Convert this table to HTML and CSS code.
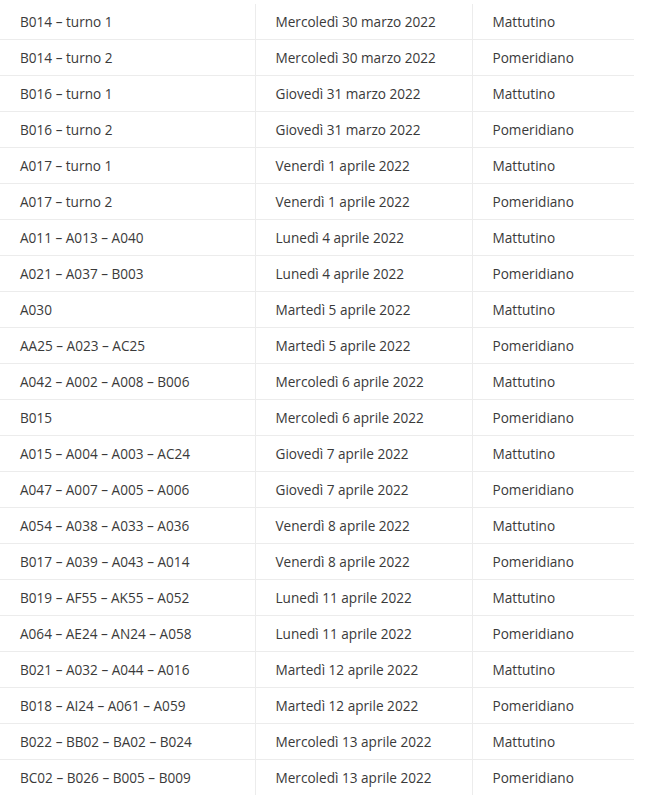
FILE: index.html
```html
<!DOCTYPE html>
<html lang="it">
<head>
<meta charset="utf-8">
<title>Calendario</title>
<link rel="stylesheet" href="styles.css">
</head>
<body>
<table class="schedule">
  <colgroup>
    <col class="c1"><col class="c2"><col class="c3">
  </colgroup>
  <tbody>
    <tr><td>B014 – turno 1</td><td>Mercoledì 30 marzo 2022</td><td>Mattutino</td></tr>
    <tr><td>B014 – turno 2</td><td>Mercoledì 30 marzo 2022</td><td>Pomeridiano</td></tr>
    <tr><td>B016 – turno 1</td><td>Giovedì 31 marzo 2022</td><td>Mattutino</td></tr>
    <tr><td>B016 – turno 2</td><td>Giovedì 31 marzo 2022</td><td>Pomeridiano</td></tr>
    <tr><td>A017 – turno 1</td><td>Venerdì 1 aprile 2022</td><td>Mattutino</td></tr>
    <tr><td>A017 – turno 2</td><td>Venerdì 1 aprile 2022</td><td>Pomeridiano</td></tr>
    <tr><td>A011 – A013 – A040</td><td>Lunedì 4 aprile 2022</td><td>Mattutino</td></tr>
    <tr><td>A021 – A037 – B003</td><td>Lunedì 4 aprile 2022</td><td>Pomeridiano</td></tr>
    <tr><td>A030</td><td>Martedì 5 aprile 2022</td><td>Mattutino</td></tr>
    <tr><td>AA25 – A023 – AC25</td><td>Martedì 5 aprile 2022</td><td>Pomeridiano</td></tr>
    <tr><td>A042 – A002 – A008 – B006</td><td>Mercoledì 6 aprile 2022</td><td>Mattutino</td></tr>
    <tr><td>B015</td><td>Mercoledì 6 aprile 2022</td><td>Pomeridiano</td></tr>
    <tr><td>A015 – A004 – A003 – AC24</td><td>Giovedì 7 aprile 2022</td><td>Mattutino</td></tr>
    <tr><td>A047 – A007 – A005 – A006</td><td>Giovedì 7 aprile 2022</td><td>Pomeridiano</td></tr>
    <tr><td>A054 – A038 – A033 – A036</td><td>Venerdì 8 aprile 2022</td><td>Mattutino</td></tr>
    <tr><td>B017 – A039 – A043 – A014</td><td>Venerdì 8 aprile 2022</td><td>Pomeridiano</td></tr>
    <tr><td>B019 – AF55 – AK55 – A052</td><td>Lunedì 11 aprile 2022</td><td>Mattutino</td></tr>
    <tr><td>A064 – AE24 – AN24 – A058</td><td>Lunedì 11 aprile 2022</td><td>Pomeridiano</td></tr>
    <tr><td>B021 – A032 – A044 – A016</td><td>Martedì 12 aprile 2022</td><td>Mattutino</td></tr>
    <tr><td>B018 – AI24 – A061 – A059</td><td>Martedì 12 aprile 2022</td><td>Pomeridiano</td></tr>
    <tr><td>B022 – BB02 – BA02 – B024</td><td>Mercoledì 13 aprile 2022</td><td>Mattutino</td></tr>
    <tr><td>BC02 – B026 – B005 – B009</td><td>Mercoledì 13 aprile 2022</td><td>Pomeridiano</td></tr>
  </tbody>
</table>
</body>
</html>
```
FILE: styles.css
```css
html, body {
  margin: 0;
  padding: 0;
  background: #ffffff;
}
body {
  padding-top: 4px;
  font-family: "Open Sans", "Liberation Sans", sans-serif;
  font-size: 13.6px;
  color: #3a3a3a;
}
.schedule {
  width: 634px;
  border-collapse: collapse;
  table-layout: fixed;
}
.c1 { width: 255px; }
.c2 { width: 217px; }
.c3 { width: 162px; }
.schedule td {
  height: 35px;
  padding: 0 0 0 20px;
  border-bottom: 1px solid #ececec;
  vertical-align: middle;
  line-height: 20px;
  white-space: nowrap;
}
.schedule td + td {
  border-left: 1px solid #ececec;
}
.schedule tr:last-child td {
  border-bottom: none;
}
```
